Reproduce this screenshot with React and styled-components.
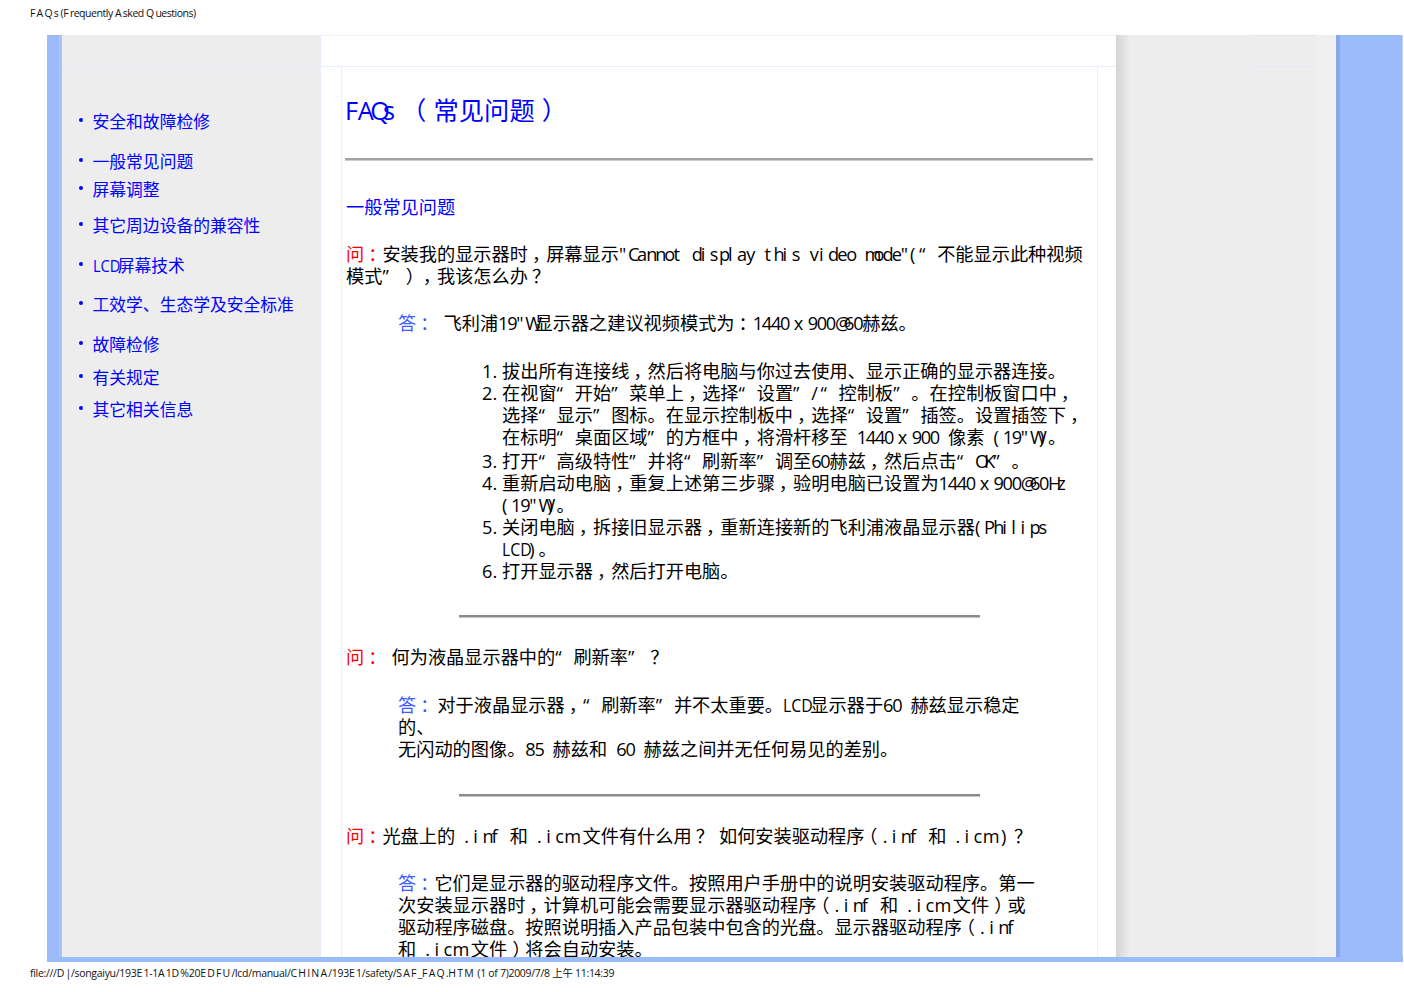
import React from "react";
import styled, { createGlobalStyle } from "styled-components";

const GlobalStyle = createGlobalStyle`
  html, body {
    margin: 0;
    padding: 0;
    background: #fff;
  }
  body {
    font-family: "Open Sans", "Noto Sans CJK SC", sans-serif;
    color: #000;
  }
`;

const Page = styled.div`
  width: 1404px;
  height: 992px;
  overflow: hidden;
`;

const PrintLine = styled.div`
  height: ${(p) => p.$h}px;
  padding-left: 30px;
  font-size: 10.5px;
  line-height: ${(p) => p.$lh}px;
  letter-spacing: ${(p) => p.$ls}px;
  color: #111;
  white-space: nowrap;
`;

const Cap = styled.span`
  letter-spacing: 1.2px;
`;

const Frame = styled.div`
  margin-left: 47px;
  width: 1356px;
  height: 927px;
  box-sizing: border-box;
  padding-bottom: 5px;
  background: #9bbbfa;
  display: flex;
  overflow: hidden;
`;

const LeftEdge = styled.div`
  width: 15px;
  flex: none;
  box-sizing: border-box;
  border-right: 3px solid #a9c3f6;
`;

const Sidebar = styled.nav`
  width: 259px;
  flex: none;
  background: #ededed;
  border-right: 1px solid #e6edfb;
  box-sizing: border-box;
`;

const TopCell = styled.div`
  height: 32px;
  box-sizing: border-box;
  border-top: 1px solid #e6ebf5;
  border-bottom: 1px solid #e3ebfb;
`;

const NavList = styled.ul`
  list-style: none;
  margin: 0;
  padding: 43px 0 0 17px;
`;

const NavItem = styled.li`
  margin-top: ${(p) => p.$top}px;
  height: 24px;
  display: flex;
  align-items: center;
  gap: 9.5px;
  font-size: 16.8px;
  line-height: 24px;
  color: #0000ff;
  white-space: nowrap;
`;

const Bullet = styled.span`
  width: 4px;
  height: 4px;
  flex: none;
  border-radius: 50%;
  background: #0000ff;
  margin-top: -4px;
`;

const Main = styled.main`
  width: 795px;
  flex: none;
  background: #fff;
  padding-left: 20px;
  box-sizing: border-box;
  display: flex;
  flex-direction: column;
`;

const MainTop = styled(TopCell)`
  margin-left: -20px;
  border-top-color: #eef2fb;
  border-bottom-color: #e8effd;
`;

const Column = styled.div`
  width: 757px;
  height: 890px;
  overflow: hidden;
  box-sizing: border-box;
  padding: 0 4px 0 3px;
  border-left: 1px solid #e8effd;
  border-right: 1px solid #e8effd;
  font-size: 18.2px;
  line-height: 22px;
  white-space: nowrap;
`;

const Title = styled.h1`
  margin: 28px 0 0 0;
  font-size: 25.3px;
  line-height: 30px;
  font-weight: 400;
  color: #0000ff;
`;

const Rule = styled.hr`
  border: 0;
  height: 2px;
  background: ${(p) => (p.$soft ? "#a3a3a3" : "#8a8a8a")};
  box-shadow: 0 1px 0 ${(p) => (p.$soft ? "#cfcfcf" : "#c4c4c4")};
  margin: ${(p) => p.$top}px ${(p) => p.$side || 0}px 0 ${(p) => (p.$side ? p.$side + 1 : 0)}px;
`;

const Subhead = styled.h2`
  margin: 36px 0 0 1px;
  font-size: 18.2px;
  line-height: 22px;
  font-weight: 400;
  color: #0000ff;
`;

const Question = styled.p`
  margin: ${(p) => p.$top}px 0 0 1px;
`;

const Answer = styled.p`
  margin: ${(p) => p.$top}px 0 0 53px;
`;

const Red = styled.span`
  color: #ff0000;
`;

const Blue = styled.span`
  color: #3f5cff;
  margin-right: ${(p) => p.$gap || 0}px;
`;

/* the source pdf puts every latin glyph in a half-em cell, so they bunch up */
const Half = styled.span`
  display: inline-block;
  width: 0.5em;
  white-space: pre;
`;

const Squeezed = styled.span`
  display: inline-block;
  width: 1.5em;
  transform: scaleX(0.87);
  transform-origin: left;
`;

const Quote = styled.span`
  display: inline-block;
  width: 1em;
`;

const Mark = styled.span`
  display: inline-block;
  transform: translateX(0.22em);
`;

const Paren = styled.span`
  display: inline-block;
  transform: translateX(${(p) => (p.$open ? "-0.28em" : "0.28em")});
`;

const Steps = styled.ol`
  margin: 26px 0 0 0;
  padding: 0 0 0 157px;
`;

const Step = styled.li`
  margin-top: ${(p) => p.$top || 0}px;
`;

const RightPane = styled.aside`
  width: 220px;
  flex: none;
  background: linear-gradient(90deg, #d4d4d4, #ededed 14px, #ededed 200px, #f0f0f0 200px);
`;

const RightTop = styled.div`
  height: 32px;
  margin-left: 136px;
  width: 65px;
  box-sizing: border-box;
  border-top: 1px solid #e2e5ee;
  border-bottom: 1px solid #dfe7fa;
`;

const RightEdge = styled.div`
  flex: 1;
  box-sizing: border-box;
  border-left: 4px solid #88a7ee;
  border-right: 1px solid #c5d6fa;
`;

// splits a string the way the scanned page spaces it
function Cn({ text }) {
  const parts = [];
  text.split("\n").forEach((line, l) => {
    if (l > 0) parts.push(<br key={`br${l}`} />);
    line.match(/LCD|[\x20-\x7e]|[“”]|[，：？]|[（）]|[^\x20-\x7e“”，：？（）]+/g)?.forEach((s, i) => {
      const key = `${l}-${i}`;
      if (s === "LCD") parts.push(<Squeezed key={key}>{s}</Squeezed>);
      else if (/^[\x20-\x7e]$/.test(s)) parts.push(<Half key={key}>{s}</Half>);
      else if (s === "“" || s === "”") parts.push(<Quote key={key}>{s}</Quote>);
      else if (/^[，：？]$/.test(s)) parts.push(<Mark key={key}>{s}</Mark>);
      else if (s === "（" || s === "）") parts.push(<Paren key={key} $open={s === "（"}>{s}</Paren>);
      else parts.push(s);
    });
  });
  return parts;
}

function Print({ text }) {
  return text.split(/([A-Z]+)/).map((s, i) => (i % 2 ? <Cap key={i}>{s}</Cap> : s));
}

export default function App() {
  return (
    <Page>
      <GlobalStyle />
      <PrintLine $h={35} $lh={26} $ls={-0.47}><Print text="FAQs (Frequently Asked Questions)" /></PrintLine>
      <Frame>
        <LeftEdge />
        <Sidebar>
          <TopCell />
          <NavList>
            <NavItem $top={0}><Bullet />安全和故障检修</NavItem>
            <NavItem $top={16}><Bullet />一般常见问题</NavItem>
            <NavItem $top={4}><Bullet />屏幕调整</NavItem>
            <NavItem $top={12}><Bullet />其它周边设备的兼容性</NavItem>
            <NavItem $top={16}><Bullet /><span><Cn text="LCD屏幕技术" /></span></NavItem>
            <NavItem $top={15}><Bullet />工效学、生态学及安全标准</NavItem>
            <NavItem $top={16}><Bullet />故障检修</NavItem>
            <NavItem $top={9}><Bullet />有关规定</NavItem>
            <NavItem $top={8}><Bullet />其它相关信息</NavItem>
          </NavList>
        </Sidebar>
        <Main>
          <MainTop />
          <Column>
            <Title><Cn text="FAQs （常见问题）" /></Title>
            <Rule $top={33} $soft />
            <Subhead>一般常见问题</Subhead>
            <Question $top={25}>
              <Red><Cn text="问：" /></Red>
              <Cn text={'安装我的显示器时，屏幕显示"Cannot display this video mode"(“不能显示此种视频\n模式”），我该怎么办？'} />
            </Question>
            <Answer $top={25}>
              <Blue><Cn text="答：" /></Blue>
              <Cn text={' 飞利浦19"W显示器之建议视频模式为：1440\u00a0x\u00a0900@60赫兹。'} />
            </Answer>
            <Steps>
              <Step><Cn text="拔出所有连接线，然后将电脑与你过去使用、显示正确的显示器连接。" /></Step>
              <Step><Cn text={'在视窗“开始”菜单上，选择“设置”/“控制板”。在控制板窗口中，\n选择“显示”图标。在显示控制板中，选择“设置”插签。设置插签下，\n在标明“桌面区域”的方框中，将滑杆移至 1440\u00a0x\u00a0900 像素 (19"W)。'} /></Step>
              <Step $top={2}><Cn text="打开“高级特性”并将“刷新率”调至60赫兹，然后点击“OK”。" /></Step>
              <Step><Cn text={'重新启动电脑，重复上述第三步骤，验明电脑已设置为1440\u00a0x\u00a0900@60Hz\n(19"W)。'} /></Step>
              <Step><Cn text={"关闭电脑，拆接旧显示器，重新连接新的飞利浦液晶显示器(Philips\nLCD)。"} /></Step>
              <Step><Cn text="打开显示器，然后打开电脑。" /></Step>
            </Steps>
            <Rule $top={33} $side={113} />
            <Question $top={29}>
              <Red><Cn text="问：" /></Red>
              <Cn text=" 何为液晶显示器中的“刷新率”？" />
            </Question>
            <Answer $top={26}>
              <Blue $gap={3}><Cn text="答：" /></Blue>
              <Cn text={"对于液晶显示器，“刷新率”并不太重要。LCD显示器于60 赫兹显示稳定\n的、\n无闪动的图像。85 赫兹和 60 赫兹之间并无任何易见的差别。"} />
            </Answer>
            <Rule $top={34} $side={113} />
            <Question $top={29}>
              <Red><Cn text="问：" /></Red>
              <Cn text="光盘上的 .inf 和 .icm 文件有什么用？ 如何安装驱动程序（.inf 和 .icm )？" />
            </Question>
            <Answer $top={25}>
              <Blue><Cn text="答：" /></Blue>
              <Cn text={"它们是显示器的驱动程序文件。按照用户手册中的说明安装驱动程序。第一\n次安装显示器时，计算机可能会需要显示器驱动程序（.inf 和 .icm 文件）或\n驱动程序磁盘。按照说明插入产品包装中包含的光盘。显示器驱动程序（.inf\n和 .icm 文件）将会自动安装。"} />
            </Answer>
          </Column>
        </Main>
        <RightPane>
          <RightTop />
        </RightPane>
        <RightEdge />
      </Frame>
      <PrintLine $h={30} $lh={22} $ls={-0.3}><Print text="file:///D|/songaiyu/193E1-1A1D%20EDFU/lcd/manual/CHINA/193E1/safety/SAF_FAQ.HTM (1 of 7)2009/7/8 上午 11:14:39" /></PrintLine>
    </Page>
  );
}
